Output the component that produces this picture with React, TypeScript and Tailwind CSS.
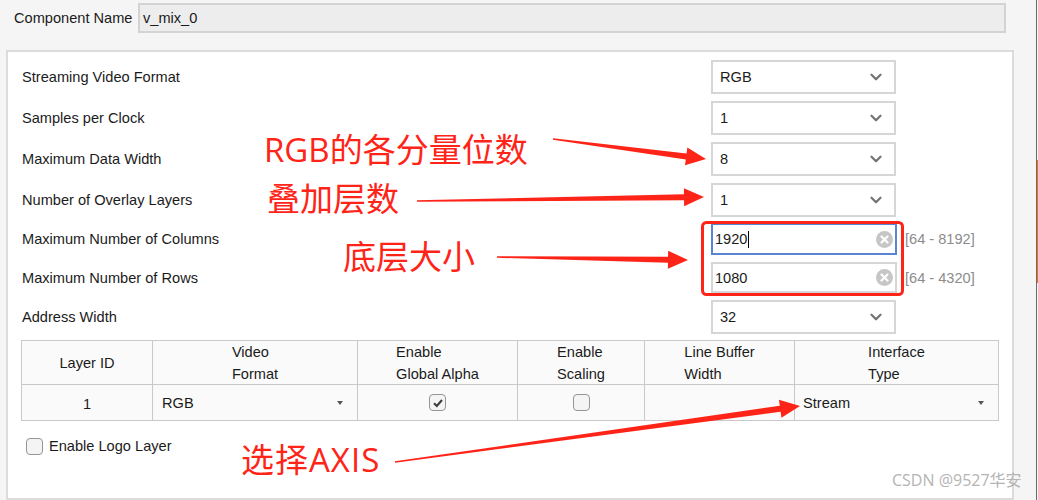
import React from 'react';
import { ChevronDown } from 'lucide-react';

const ui = { fontFamily: '"Liberation Sans", Arial, "Noto Sans CJK SC", sans-serif' };
const cjk = { fontFamily: '"Open Sans", "Noto Sans CJK SC", sans-serif' };

type Pt = [number, number];

// tapered arrow: thin tail, thicker neck, wide head
function arrowPoints(tail: Pt, tip: Pt, tw: number, sw: number, hw: number, hl: number) {
    const dx = tip[0] - tail[0];
    const dy = tip[1] - tail[1];
    const len = Math.hypot(dx, dy);
    const ux = dx / len;
    const uy = dy / len;
    const nx = -uy;
    const ny = ux;
    const neck: Pt = [tip[0] - ux * hl, tip[1] - uy * hl];
    const p = (b: Pt, w: number): string => `${b[0] + nx * w / 2},${b[1] + ny * w / 2}`;
    return [
        p(tail, tw), p(neck, sw), p(neck, hw), `${tip[0]},${tip[1]}`,
        p(neck, -hw), p(neck, -sw), p(tail, -tw),
    ].join(' ');
}

const Select = ({ value }: { value: string }) => (
    <div className="w-[185px] h-full border-2 border-[#d6d6d6] bg-white flex items-center justify-between pl-[7px] pr-[9px] text-[14.6px] text-[#1b1b1b]">
        <span className="pt-[2px]">{value}</span>
        <ChevronDown size={18} strokeWidth={3} color="#737373" />
    </div>
);

const ClearIcon = () => (
    <svg width="17" height="17" viewBox="0 0 17 17">
        <circle cx="8.5" cy="8.5" r="8.5" fill="#c6c6c6" />
        <path d="M5.5 5.5 L11.5 11.5 M11.5 5.5 L5.5 11.5" stroke="#fff" strokeWidth="2.2" strokeLinecap="round" />
    </svg>
);

const NumInput = ({ value, range, focused }: { value: string; range: string; focused?: boolean }) => (
    <div className="flex items-center h-full">
        <div className={`w-[186px] h-full border-2 bg-white flex items-center justify-between pl-[2px] pr-[2px] text-[14.6px] text-[#1b1b1b] ${focused ? 'border-[#5a85d4]' : 'border-[#d6d6d6]'}`}>
            <span className="flex items-center pt-[2px]">
                {value}
                {focused && <span className="inline-block w-px h-[17px] bg-black ml-px" />}
            </span>
            <ClearIcon />
        </div>
        <span className="ml-[8px] pt-[2px] text-[14.6px] text-[#8c8c8c]">{range}</span>
    </div>
);

const Row = ({ label, h, mt, children }: { label: string; h: string; mt: string; children: React.ReactNode }) => (
    <div className={`flex items-center ${h} ${mt}`}>
        <div className="w-[690px] pl-px pt-[2px] text-[14.6px] text-[#1b1b1b]">{label}</div>
        {children}
    </div>
);

const Check = ({ checked }: { checked?: boolean }) => (
    <div className="w-[17px] h-[17px] rounded-[4px] border-[1.5px] border-[#959595] bg-[#f4f4f4] flex items-center justify-center">
        {checked && (
            <svg width="12" height="12" viewBox="0 0 12 12">
                <path d="M2 6.2 L4.8 9 L10 3" fill="none" stroke="#3a3a3a" strokeWidth="2" />
            </svg>
        )}
    </div>
);

const Caret = () => <span className="w-0 h-0 border-l-[3.5px] border-r-[3.5px] border-t-[4px] border-l-transparent border-r-transparent border-t-[#555]" />;

const HeadCell = ({ lines, last }: { lines: string[]; last?: boolean }) => (
    <div className={`h-[44px] flex items-center justify-center bg-[#fafafa] border-b border-[#c9c9c9] ${last ? '' : 'border-r'}`}>
        <div className="text-left leading-[22px] pt-px text-[14.6px] text-[#1b1b1b]">
            {lines.map(l => <div key={l}>{l}</div>)}
        </div>
    </div>
);

export default function App() {
    const red = '#ff2418';
    return (
        <div className="relative w-[1038px] h-[500px] overflow-hidden bg-[#f5f5f5] flex" style={ui}>
            <div className="w-[1036px] flex flex-col">
                <div className="flex items-center pt-[3px] pl-[14px]">
                    <div className="w-[124px] pt-[2px] text-[14.6px] text-[#1b1b1b]">Component Name</div>
                    <div className="w-[868px] h-[30px] bg-[#ededed] border-2 border-[#d3d3d3] flex items-center pl-[3px] pt-[2px] text-[14.6px] text-[#1b1b1b]">v_mix_0</div>
                </div>

                <div className="mt-[17px] ml-[6px] w-[1008px] h-[460px] bg-white border-2 border-[#dcdcdc] px-[13px] pt-[8px] flex flex-col">
                    <Row label="Streaming Video Format" h="h-[34px]" mt=""><Select value="RGB" /></Row>
                    <Row label="Samples per Clock" h="h-[34px]" mt="mt-[7px]"><Select value="1" /></Row>
                    <Row label="Maximum Data Width" h="h-[34px]" mt="mt-[7px]"><Select value="8" /></Row>
                    <Row label="Number of Overlay Layers" h="h-[34px]" mt="mt-[7px]"><Select value="1" /></Row>
                    <Row label="Maximum Number of Columns" h="h-[32px]" mt="mt-[6px]"><NumInput value="1920" range="[64 - 8192]" focused /></Row>
                    <Row label="Maximum Number of Rows" h="h-[31px]" mt="mt-[7px]"><NumInput value="1080" range="[64 - 4320]" /></Row>
                    <Row label="Address Width" h="h-[34px]" mt="mt-[7px]"><Select value="32" /></Row>

                    <div className="mt-[6px] w-[978px] border border-[#c9c9c9] grid grid-cols-[131px_205px_160px_127px_150px_203px] text-[14.6px] text-[#1b1b1b]">
                        <HeadCell lines={['Layer ID']} />
                        <HeadCell lines={['Video', 'Format']} />
                        <HeadCell lines={['Enable', 'Global Alpha']} />
                        <HeadCell lines={['Enable', 'Scaling']} />
                        <HeadCell lines={['Line Buffer', 'Width']} />
                        <HeadCell lines={['Interface', 'Type']} last />

                        <div className="h-[35px] bg-[#fafafa] flex items-center justify-center border-r border-[#c9c9c9] pt-[4px]">1</div>
                        <div className="h-[35px] bg-[#fafafa] flex items-center justify-between pl-[9px] pr-[14px] border-r border-[#c9c9c9]">
                            <span className="pt-[2px]">RGB</span><Caret />
                        </div>
                        <div className="h-[35px] bg-[#fafafa] flex items-center justify-center border-r border-[#c9c9c9]"><Check checked /></div>
                        <div className="h-[35px] bg-[#fafafa] flex items-center justify-center border-r border-[#c9c9c9]"><Check /></div>
                        <div className="h-[35px] bg-[#fafafa] border-r border-[#c9c9c9]" />
                        <div className="h-[35px] bg-[#fafafa] flex items-center justify-between pl-[8px] pr-[14px]">
                            <span className="pt-[2px]">Stream</span><Caret />
                        </div>
                    </div>

                    <div className="mt-[15px] ml-[5px] flex items-center gap-[6px] text-[14.6px] text-[#1b1b1b]">
                        <Check />
                        <span>Enable Logo Layer</span>
                    </div>
                </div>
            </div>
            <div className="w-px bg-[#6a6a6a]" />
            <div className="w-px flex flex-col">
                <div className="h-[160px]" />
                <div className="h-[123px] bg-[#e07a2a]" />
            </div>

            {/* annotations over the form */}
            <svg className="absolute left-0 top-0 pointer-events-none" width="1038" height="500">
                <polygon points={arrowPoints([553, 139], [706, 159], 1.5, 6, 18, 20)} fill={red} />
                <polygon points={arrowPoints([417, 201], [704, 197], 1.5, 6, 18, 20)} fill={red} />
                <polygon points={arrowPoints([497, 257], [688, 260], 1.5, 6, 18, 20)} fill={red} />
                <polygon points={arrowPoints([395, 462], [800, 406], 1.5, 6, 18, 20)} fill={red} />
                <rect x="702.5" y="222.5" width="200" height="72" rx="4" fill="none" stroke={red} strokeWidth="3" />
            </svg>
            <div className="absolute left-[264px] top-[133px] text-[33px] leading-none text-[#ff2418] whitespace-nowrap" style={cjk}>RGB的各分量位数</div>
            <div className="absolute left-[267px] top-[182px] text-[33px] leading-none text-[#ff2418] whitespace-nowrap" style={cjk}>叠加层数</div>
            <div className="absolute left-[343px] top-[240px] text-[33px] leading-none text-[#ff2418] whitespace-nowrap" style={cjk}>底层大小</div>
            <div className="absolute left-[241px] top-[443px] text-[33px] leading-none tracking-[1px] text-[#ff2418] whitespace-nowrap" style={cjk}>选择AXIS</div>
            <div className="absolute left-[892px] top-[472px] text-[16px] leading-none text-[#b4b4b4] whitespace-nowrap" style={cjk}>CSDN @9527华安</div>
        </div>
    );
}
